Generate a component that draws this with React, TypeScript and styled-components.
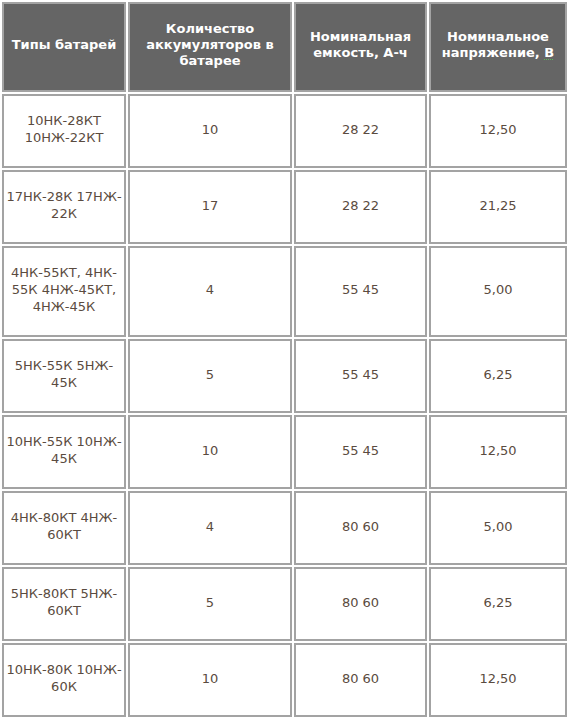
import { Fragment } from "react";
import styled, { createGlobalStyle } from "styled-components";

type Battery = {
    name: string;
    cells: string;
    capacity: string;
    voltage: string;
};

const batteries: Battery[] = [
    { name: "10НК-28КТ 10НЖ-22КТ", cells: "10", capacity: "28 22", voltage: "12,50" },
    { name: "17НК-28К 17НЖ-22К", cells: "17", capacity: "28 22", voltage: "21,25" },
    { name: "4НК-55КТ, 4НК-55К 4НЖ-45КТ, 4НЖ-45К", cells: "4", capacity: "55 45", voltage: "5,00" },
    { name: "5НК-55К 5НЖ-45К", cells: "5", capacity: "55 45", voltage: "6,25" },
    { name: "10НК-55К 10НЖ-45К", cells: "10", capacity: "55 45", voltage: "12,50" },
    { name: "4НК-80КТ 4НЖ-60КТ", cells: "4", capacity: "80 60", voltage: "5,00" },
    { name: "5НК-80КТ 5НЖ-60КТ", cells: "5", capacity: "80 60", voltage: "6,25" },
    { name: "10НК-80К 10НЖ-60К", cells: "10", capacity: "80 60", voltage: "12,50" },
];

const columnWidths = [124, 164, 133, 138];

const GlobalStyle = createGlobalStyle`
    html, body {
        margin: 0;
        padding: 0;
        background: #ffffff;
    }
`;

const Table = styled.table`
    width: 569px;
    table-layout: fixed;
    border-collapse: separate;
    border-spacing: 2px;
    font-family: "DejaVu Sans", Verdana, sans-serif;
    font-size: 13px;
`;

const HeadCell = styled.th`
    box-sizing: border-box;
    background: #656565;
    color: #ffffff;
    font-weight: bold;
    line-height: 16px;
    text-align: center;
    vertical-align: middle;
    padding: 17px 3px 21px;
    border: 2px solid #a3a3a3;
`;

const Cell = styled.td`
    box-sizing: border-box;
    background: #ffffff;
    color: #5a4b40;
    line-height: 17px;
    text-align: center;
    vertical-align: middle;
    padding: 16px 2px 20px;
    border: 2px solid #a3a3a3;
`;

const Spell = styled.span`
    text-decoration: underline dotted #5cb85c;
    text-decoration-thickness: 1px;
    text-underline-offset: 2px;
`;

// allow a line break after every hyphen, as the original page wraps
const Breakable = ({ text }: { text: string }) => {
    const parts = text.split("-");
    return (
        <>
            {parts.map((part, i) => (
                <Fragment key={i}>
                    {part}
                    {i < parts.length - 1 && (
                        <>
                            -<wbr />
                        </>
                    )}
                </Fragment>
            ))}
        </>
    );
};

export default function App() {
    return (
        <>
            <GlobalStyle />
            <Table>
                <colgroup>
                    {columnWidths.map((w, i) => (
                        <col key={i} style={{ width: w }} />
                    ))}
                </colgroup>
                <thead>
                    <tr>
                        <HeadCell>Типы батарей</HeadCell>
                        <HeadCell>Количество аккумуляторов в батарее</HeadCell>
                        <HeadCell>Номинальная емкость, А-ч</HeadCell>
                        <HeadCell>
                            Номинальное напряжение, <Spell>В</Spell>
                        </HeadCell>
                    </tr>
                </thead>
                <tbody>
                    {batteries.map((b) => (
                        <tr key={b.name}>
                            <Cell>
                                <Breakable text={b.name} />
                            </Cell>
                            <Cell>{b.cells}</Cell>
                            <Cell>{b.capacity}</Cell>
                            <Cell>{b.voltage}</Cell>
                        </tr>
                    ))}
                </tbody>
            </Table>
        </>
    );
}
